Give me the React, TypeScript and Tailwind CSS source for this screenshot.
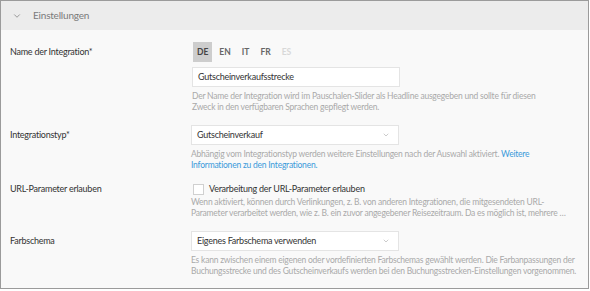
import { ChevronDown } from "lucide-react";

const langs = [
    { code: "DE", active: true },
    { code: "EN" },
    { code: "IT" },
    { code: "FR" },
    { code: "ES", disabled: true },
];

function Row({ label, children }: { label: string; children: React.ReactNode }) {
    return (
        <div className="flex">
            <div className="flex h-[20px] w-[190px] shrink-0 items-center pl-[9px] text-[9px] tracking-[-0.25px] text-[#333]">{label}</div>
            <div className="flex-1">{children}</div>
        </div>
    );
}

function Help({ children }: { children: React.ReactNode }) {
    return <p className="mt-[4px] text-[8.5px] leading-[10.5px] tracking-[-0.22px] text-[#a9a9a9]">{children}</p>;
}

function Select({ value }: { value: string }) {
    return (
        <div className="flex h-[20px] w-[208px] items-center justify-between border border-[#e4e4e4] bg-white pl-[5px] pr-[8px] text-[9px] tracking-[-0.25px] text-[#333]">
            <span>{value}</span>
            <ChevronDown size={8} strokeWidth={1.5} className="text-[#999]" />
        </div>
    );
}

export default function App() {
    return (
        <div className="h-[291px] w-[590px] bg-white font-['Lato',sans-serif]">
            <div className="h-[289px] w-[589px] border border-[#9b9b9b] bg-[#f9f9f9]">
                {/* Section header */}
                <div className="flex h-[29px] items-center bg-[#ececec] pl-[11px]">
                    <ChevronDown size={10} strokeWidth={1.6} className="text-[#6f6f6f]" />
                    <span className="ml-[11px] text-[10px] tracking-[-0.2px] text-[#7a7a7a]">Einstellungen</span>
                </div>

                <div className="flex flex-col gap-[13px] pt-[12px]">
                    <div className="flex">
                        <div className="flex h-[20px] w-[191px] shrink-0 items-center pl-[9px] text-[9px] tracking-[-0.25px] text-[#333]">
                            Name der Integration*
                        </div>
                        <div className="flex-1">
                            {/* Language tabs */}
                            <div className="flex items-center gap-[3px] pl-[1px] text-[8.5px] font-bold">
                                {langs.map(l => (
                                    <span
                                        key={l.code}
                                        className={`flex h-[20px] items-center px-[4px] ${
                                            l.active ? "bg-[#cdcdcd] text-[#444]" : l.disabled ? "text-[#d8d8d8]" : "text-[#666]"
                                        }`}
                                    >
                                        {l.code}
                                    </span>
                                ))}
                            </div>
                            <div className="mt-[5px] flex h-[20px] w-[208px] items-center border border-[#e4e4e4] bg-white pl-[5px] text-[9px] tracking-[-0.25px] text-[#333]">
                                Gutscheinverkaufsstrecke
                            </div>
                            <Help>
                                Der Name der Integration wird im Pauschalen-Slider als Headline ausgegeben und sollte für diesen
                                <br />
                                Zweck in den verfügbaren Sprachen gepflegt werden.
                            </Help>
                        </div>
                    </div>

                    <Row label="Integrationstyp*">
                        <Select value="Gutscheinverkauf" />
                        <Help>
                            Abhängig vom Integrationstyp werden weitere Einstellungen nach der Auswahl aktiviert.{" "}
                            <span className="text-[#3b9ad9]">Weitere</span>
                            <br />
                            <span className="text-[#3b9ad9]">Informationen zu den Integrationen.</span>
                        </Help>
                    </Row>

                    <div className="flex">
                        <div className="flex h-[12px] w-[190px] shrink-0 items-center pl-[9px] text-[9px] tracking-[-0.25px] text-[#333]">
                            URL-Parameter erlauben
                        </div>
                        <div className="flex-1">
                            <label className="flex h-[12px] items-center">
                                <span className="ml-[2px] h-[11px] w-[11px] border border-[#d0d0d0] bg-white" />
                                <span className="ml-[5px] text-[9px] tracking-[-0.25px] text-[#333]">Verarbeitung der URL-Parameter erlauben</span>
                            </label>
                            <p className="mt-[2px] text-[8.5px] leading-[10.5px] tracking-[-0.22px] text-[#a9a9a9]">
                                Wenn aktiviert, können durch Verlinkungen, z. B. von anderen Integrationen, die mitgesendeten URL-
                                <br />
                                Parameter verarbeitet werden, wie z. B. ein zuvor angegebener Reisezeitraum. Da es möglich ist, mehrere …
                            </p>
                        </div>
                    </div>

                    <Row label="Farbschema">
                        <Select value="Eigenes Farbschema verwenden" />
                        <Help>
                            Es kann zwischen einem eigenen oder vordefinierten Farbschemas gewählt werden. Die Farbanpassungen der
                            <br />
                            Buchungsstrecke und des Gutscheinverkaufs werden bei den Buchungsstrecken-Einstellungen vorgenommen.
                        </Help>
                    </Row>
                </div>
            </div>
        </div>
    );
}
